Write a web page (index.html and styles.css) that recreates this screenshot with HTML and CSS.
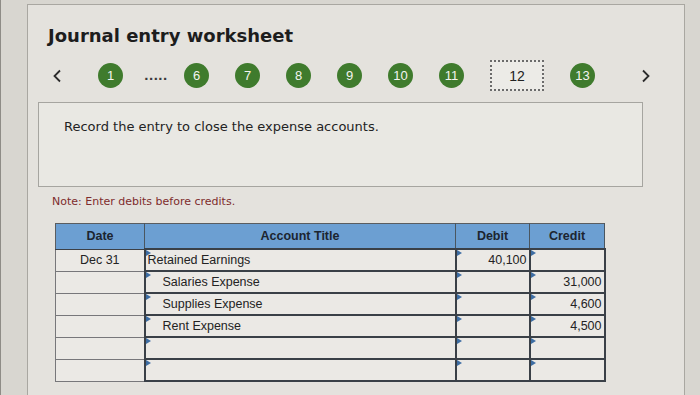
FILE: index.html
```html
<!DOCTYPE html>
<html>
<head>
<meta charset="utf-8">
<link rel="stylesheet" href="styles.css">
</head>
<body>
<div class="panel">
  <h1 class="title">Journal entry worksheet</h1>
  <div class="nav">
    <span class="arrow prev"><svg width="10" height="14" viewBox="0 0 10 14"><path d="M8 1.5 L2.5 7 L8 12.5" fill="none" stroke="#2b2b2b" stroke-width="1.8"/></svg></span>
    <span class="step">1</span>
    <span class="dots">.....</span>
    <span class="step">6</span>
    <span class="step">7</span>
    <span class="step">8</span>
    <span class="step">9</span>
    <span class="step">10</span>
    <span class="step">11</span>
    <span class="current">12</span>
    <span class="step">13</span>
    <span class="arrow next"><svg width="10" height="14" viewBox="0 0 10 14"><path d="M2 1.5 L7.5 7 L2 12.5" fill="none" stroke="#2b2b2b" stroke-width="1.8"/></svg></span>
  </div>
  <div class="prompt">Record the entry to close the expense accounts.</div>
  <p class="note">Note: Enter debits before credits.</p>
  <table class="journal">
    <thead>
      <tr>
        <th class="c-date">Date</th>
        <th class="c-acct">Account Title</th>
        <th class="c-debit">Debit</th>
        <th class="c-credit">Credit</th>
      </tr>
    </thead>
    <tbody>
      <tr>
        <td class="date">Dec 31</td>
        <td class="inp acct">Retained Earnings</td>
        <td class="inp num">40,100</td>
        <td class="inp num"></td>
      </tr>
      <tr>
        <td class="date"></td>
        <td class="inp acct indent">Salaries Expense</td>
        <td class="inp num"></td>
        <td class="inp num">31,000</td>
      </tr>
      <tr>
        <td class="date"></td>
        <td class="inp acct indent">Supplies Expense</td>
        <td class="inp num"></td>
        <td class="inp num">4,600</td>
      </tr>
      <tr>
        <td class="date"></td>
        <td class="inp acct indent">Rent Expense</td>
        <td class="inp num"></td>
        <td class="inp num">4,500</td>
      </tr>
      <tr>
        <td class="date"></td>
        <td class="inp acct"></td>
        <td class="inp num"></td>
        <td class="inp num"></td>
      </tr>
      <tr>
        <td class="date"></td>
        <td class="inp acct"></td>
        <td class="inp num"></td>
        <td class="inp num"></td>
      </tr>
    </tbody>
  </table>
</div>
</body>
</html>
```

FILE: styles.css
```css
html, body {
  margin: 0;
  padding: 0;
}
body {
  background: #d8d6d0;
  width: 700px;
  height: 395px;
  overflow: hidden;
  border-left: 1px solid #8e8c86;
  box-sizing: border-box;
  font-family: "DejaVu Sans", Verdana, sans-serif;
  color: #222;
}
.panel {
  margin: 4px 0 0 26px;
  width: 658px;
  height: 400px;
  box-sizing: border-box;
  border: 1px solid #a9a7a1;
  border-bottom: none;
  background: #e4e2dd;
  padding-top: 19px;
}
.title {
  margin: 0 0 0 20px;
  font-size: 18px;
  line-height: 24px;
  font-weight: bold;
  color: #1d1d1d;
}
.nav {
  display: flex;
  align-items: center;
  gap: 26px;
  height: 31px;
  margin: 12px 0 0 23px;
  font-family: "Liberation Sans", Arial, sans-serif;
}
.arrow {
  width: 12px;
  height: 14px;
  display: flex;
  justify-content: center;
}
.prev { margin-right: 9px; }
.next { margin-left: 19px; }
.step {
  width: 25px;
  height: 25px;
  border-radius: 50%;
  background: #3f7b2d;
  color: #f4f4f0;
  font-size: 13px;
  display: flex;
  align-items: center;
  justify-content: center;
}
.dots {
  width: 32px;
  margin: 0 -14px 0 -9px;
  font-size: 15px;
  font-weight: bold;
  letter-spacing: 0.5px;
  color: #3a3a3a;
  text-align: center;
  line-height: 1;
  padding-bottom: 2px;
}
.current {
  width: 54px;
  height: 31px;
  box-sizing: border-box;
  border: 2px dotted #6b6b6b;
  background: #ecebe7;
  color: #222;
  font-size: 14px;
  display: flex;
  align-items: center;
  justify-content: center;
}
.prompt {
  margin: 11px 0 0 10px;
  width: 605px;
  height: 85px;
  box-sizing: border-box;
  border: 1px solid #a6a5a0;
  background: #e9e8e3;
  padding: 16px 0 0 25px;
  font-size: 13px;
  line-height: 16px;
  color: #232323;
}
.note {
  margin: 8px 0 0 24px;
  font-size: 11px;
  line-height: 14px;
  color: #7e2c2c;
}
.journal {
  margin: 14px 0 0 27px;
  width: 545px;
  border-collapse: collapse;
  table-layout: fixed;
  font-family: "Liberation Sans", Arial, sans-serif;
  font-size: 12.5px;
  color: #232323;
  border: 1px solid #5a5d60;
}
.journal th {
  height: 24px;
  padding: 0;
  background: #6c9fd2;
  color: #1c2530;
  font-weight: bold;
  font-size: 12.5px;
  border-right: 1px solid #4a5660;
  border-bottom: 1px solid #3c4046;
}
.c-date { width: 88px; }
.c-acct { width: 310px; }
.c-debit { width: 73px; }
.c-credit { width: 74px; }
.journal td {
  height: 20px;
  padding: 0;
  background: #ebe9e5;
  vertical-align: middle;
}
.journal td.date {
  text-align: center;
  border: 1px solid #77777a;
}
.journal td.inp {
  position: relative;
  border: 2px solid #3a4047;
}
.journal td.inp::before {
  content: "";
  position: absolute;
  top: 0;
  left: 0;
  border-left: 5px solid #3d6da3;
  border-top: 3px solid transparent;
  border-bottom: 3px solid transparent;
}
.journal td.acct {
  padding-left: 2px;
}
.journal td.indent {
  padding-left: 17px;
}
.journal td.num {
  text-align: right;
  padding-right: 2px;
}
```
